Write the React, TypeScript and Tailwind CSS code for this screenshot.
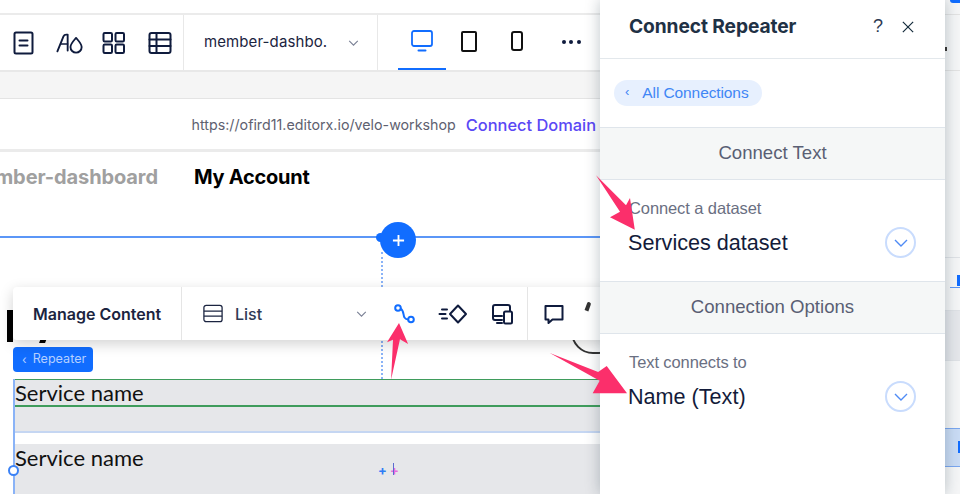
import React from "react";

const ink = "#162d3d";
const navy = "#0f1b3d";

function Arrow({ className, points }: { className: string; points: string }) {
  return (
    <svg className={className} viewBox="0 0 100 100" preserveAspectRatio="none">
      <polygon points={points} fill="#fb2f6b" />
    </svg>
  );
}

function Icon({ children, className }: { children: React.ReactNode; className?: string }) {
  return (
    <svg viewBox="0 0 24 24" fill="none" stroke={navy} strokeWidth="2" strokeLinecap="round" strokeLinejoin="round" className={className ?? "w-6 h-6"}>
      {children}
    </svg>
  );
}

function RoundChevron() {
  return (
    <div className="w-[31px] h-[31px] rounded-full border-2 border-[#c9dcfd] flex items-center justify-center">
      <svg viewBox="0 0 14 8" className="w-[14px] h-[8px]" fill="none" stroke="#4f8bf5" strokeWidth="1.4">
        <path d="M1 1l6 6 6-6" />
      </svg>
    </div>
  );
}

function Field({ label, value }: { label: string; value: string }) {
  return (
    <div className="flex items-start justify-between pl-[29px] pr-[29px] pt-[18px] h-[101px]">
      <div>
        <div className="text-[16.5px] leading-[20px] text-[#6a6f82] font-['Liberation_Sans',sans-serif] tracking-[-0.1px]">{label}</div>
        <div className="text-[21.6px] leading-[28px] mt-[11px] -ml-[1px] text-[#131b3a] font-['Liberation_Sans',sans-serif]">{value}</div>
      </div>
      <div className="mt-[29px]"><RoundChevron /></div>
    </div>
  );
}

function SectionHead({ children }: { children: React.ReactNode }) {
  return (
    <div className="h-[53px] bg-[#f5f7f7] border-y border-[#dfe5eb] flex items-center justify-center text-[18.6px] text-[#5a5f74] font-['Liberation_Sans',sans-serif]">
      <span className="-mt-[1px]">{children}</span>
    </div>
  );
}

export default function App() {
  return (
    <div className="relative w-[960px] h-[494px] overflow-hidden bg-white font-['Inter',sans-serif]">
      {/* Top bar */}
      <div className="h-[15px] border-b-2 border-[#ebebeb]" />
      <div className="h-[57px] flex items-stretch border-b-2 border-[#e8e8e8] bg-white">
        <div className="w-[184px] flex items-center pl-[11px] gap-[20px] border-r border-[#e8e8e8] shrink-0">
          <Icon className="w-[24px] h-[24px]">
            <rect x="3.500" y="1.500" width="18" height="21" rx="1.500" />
            <path d="M8.500 9.500h8M8.500 14.500h8" />
          </Icon>
          <svg viewBox="0 0 30 24" className="w-[28px] h-[24px] ml-[1px]" fill="none" stroke={navy} strokeWidth="2" strokeLinecap="round" strokeLinejoin="round">
            <path d="M1.500 21L8 5C8.500 3.800 9.500 3 11 3L12.500 3L12.500 20" />
            <path d="M5.500 13H12.500" strokeWidth="1.500" />
            <path d="M21.500 6.500C24.500 10 27.500 13 27.500 16.300a6 6 0 0 1-12 0C15.500 13 18.500 10 21.500 6.500z" />
          </svg>
          <Icon className="w-[24px] h-[24px] -ml-[2px]">
            <rect x="1.500" y="2" width="8.500" height="8.500" rx="1.200" />
            <rect x="13.500" y="2" width="8.500" height="8.500" rx="1.200" />
            <rect x="1.500" y="13.500" width="8.500" height="8.500" rx="1.200" />
            <rect x="13.500" y="13.500" width="8.500" height="8.500" rx="1.200" />
          </Icon>
          <Icon className="w-[24px] h-[24px] ml-[2px]">
            <rect x="1.500" y="2" width="21" height="20" rx="2" />
            <path d="M1.500 8.500h21M1.500 15h21M8.500 2v20" />
          </Icon>
        </div>
        <div className="w-[194px] border-r border-[#e8e8e8] flex items-center pl-[20px] shrink-0">
          <span className="text-[15px] text-[#1b2440] tracking-[0.1px]">member-dashbo.</span>
          <svg viewBox="0 0 12 7" className="ml-[21px] w-[11px] h-[6px]" fill="none" stroke="#7a8095" strokeWidth="1.300"><path d="M1 1l5 5 5-5" /></svg>
        </div>
        <div className="flex items-stretch pl-[20px]">
          <div className="w-[48px] relative flex items-center justify-center pb-[3px]">
            <svg viewBox="0 0 24 24" className="w-[24px] h-[24px]" fill="none" stroke="#116dff" strokeWidth="1.800" strokeLinecap="round">
              <rect x="2" y="2" width="20" height="15" rx="2" />
              <path d="M8.500 21.500h7" strokeWidth="2" />
            </svg>
            <div className="absolute bottom-0 left-0 right-0 h-[2px] bg-[#116dff]" />
          </div>
          <div className="w-[48px] -ml-[1px] flex items-center justify-center pb-[3px]">
            <div className="w-[16px] h-[21px] rounded-[2px] border-2 border-[#111]" />
          </div>
          <div className="w-[48px] flex items-center justify-center pb-[3px]">
            <div className="w-[12px] h-[20px] rounded-[3px] border-2 border-[#111]" />
          </div>
          <div className="w-[60px] flex items-center justify-center gap-[3.5px] pb-[2px]">
            <span className="w-[4px] h-[4px] rounded-full bg-[#0f1b3d]" />
            <span className="w-[4px] h-[4px] rounded-full bg-[#0f1b3d]" />
            <span className="w-[4px] h-[4px] rounded-full bg-[#0f1b3d]" />
          </div>
        </div>
      </div>
      {/* Grey strip */}
      <div className="h-[27px] bg-[#f5f5f5] border-b border-[#e4e4e4]" />
      {/* URL bar */}
      <div className="h-[53px] border-b-[3px] border-[#ebebeb] flex items-center justify-end pr-[364px] gap-[10px] pt-[2px]">
        <span className="text-[14.25px] text-[#5e6170] whitespace-nowrap">https://ofird11.editorx.io/velo-workshop</span>
        <span className="text-[16.4px] font-medium text-[#5a48f5] whitespace-nowrap">Connect Domain</span>
      </div>
      {/* Site page */}
      <div className="flex items-center h-[50px] -ml-[35px] gap-[36px]">
        <span className="text-[20px] font-bold text-[#a0a0a0] whitespace-nowrap tracking-[-0.1px]">member-dashboard</span>
        <span className="text-[20px] font-bold text-black whitespace-nowrap tracking-[-0.25px]">My Account</span>
      </div>
      <div className="h-[34px]" />
      <div className="h-[2px] w-[600px] bg-[#5b96f7]" />

      {/* Repeater */}
      <div className="mt-[141px] ml-[13px] w-[587px] border-l-2 border-[#8ab3f7]">
        <div className="h-[28px] bg-[#e6e7ea] border-t border-b-2 border-t-[#3f9c5c] border-b-[#3f9c5c] leading-[26px] text-[22px] text-[#111] font-['Lato',sans-serif]">
          Service name
        </div>
        <div className="h-[26px] bg-[#e6e7ea] border-b-2 border-[#c5d6f2]" />
        <div className="h-[11px]" />
        <div className="h-[60px] bg-[#e6e7ea] leading-[28px] text-[22px] text-[#111] font-['Lato',sans-serif]">
          Service name
        </div>
      </div>

      {/* Selection handles */}
      <div className="absolute left-[8px] top-[465px] w-[11px] h-[11px] rounded-full bg-white border-2 border-[#3b82f6]" />
      <div className="absolute left-[13px] top-[347px] w-[80px] h-[25px] rounded-[4px] bg-[#116dff] flex items-center pl-[9px] gap-[6px] text-[12.6px] text-[#b5d0ff]">
        <span className="text-[12px]">‹</span><span>Repeater</span>
      </div>
      <div className="absolute left-[381px] top-[252px] h-[127px] border-l-2 border-dotted border-[#8ab3f7]" />
      <div className="absolute left-[376px] top-[233px] w-[9px] h-[9px] rounded-full bg-[#116dff]" />
      <div className="absolute left-[380px] top-[222px] w-[36px] h-[36px] rounded-full bg-[#116dff] flex items-center justify-center">
        <svg viewBox="0 0 14 14" className="w-[13px] h-[13px]" stroke="white" strokeWidth="2"><path d="M7 1v12M1 7h12" /></svg>
      </div>
      <div className="absolute left-[378px] top-[464px] text-[#2f7cf6] text-[13px] leading-[12px] font-bold">+</div>
      <div className="absolute left-[390px] top-[464px] text-[#e56adf] text-[13px] leading-[12px] font-bold">+</div>
      <div className="absolute left-[393px] top-[463px] h-[12px] w-[1px] bg-[#5a6bd0]" />

      {/* Heading fragment behind toolbar */}
      <div className="absolute left-[7px] top-[310px] w-[6px] h-[32px] bg-black" />
      <div className="absolute left-[40px] top-[338px] w-[6px] h-[5px] bg-black -skew-x-[20deg]" />
      <div className="absolute left-[571px] top-[310px] w-[50px] h-[44px] rounded-full border-2 border-[#333]" />

      {/* Floating toolbar */}
      <div className="absolute left-[13px] top-[287px] w-[600px] h-[53px] bg-white rounded-[4px] shadow-[0_4px_14px_rgba(0,0,0,0.18)] flex items-stretch">
        <div className="w-[169px] border-r border-[#e5e5e5] flex items-center pl-[20px] text-[16px] font-semibold text-[#1b2440] shrink-0">
          Manage Content
        </div>
        <div className="w-[188px] flex items-center pl-[21px] shrink-0">
          <svg viewBox="0 0 22 20" className="w-[20px] h-[19px]" fill="none" stroke="#1b2440" strokeWidth="1.400">
            <rect x="1" y="1" width="20" height="18" rx="2.500" />
            <path d="M1 7.500h20M1 13h20" />
          </svg>
          <span className="ml-[12px] text-[16px] font-medium text-[#2f3a55]">List</span>
          <svg viewBox="0 0 12 7" className="ml-auto mr-[3px] w-[11px] h-[6px]" fill="none" stroke="#7a8095" strokeWidth="1.300"><path d="M1 1l5 5 5-5" /></svg>
        </div>
        <div className="w-[158px] border-r border-[#e5e5e5] flex items-center gap-[22px] shrink-0 pl-[22px]">
          <svg viewBox="0 0 24 24" className="w-[24px] h-[24px]" fill="none" stroke="#116dff" strokeWidth="2" strokeLinecap="round">
            <circle cx="6" cy="6" r="2.800" />
            <circle cx="19" cy="17.500" r="2.800" />
            <path d="M8.800 6.800C12 8.500 11 13 12.500 15.500C13.500 17 15 17.500 16.200 17.500" />
          </svg>
          <svg viewBox="0 0 30 24" className="w-[30px] h-[24px]" fill="none" stroke={navy} strokeWidth="2" strokeLinecap="round" strokeLinejoin="round">
            <path d="M20 3.500l8 8.500-8 8.500-8-8.500z" />
            <path d="M4 7.500h5M1.500 12h6M4 16.500h5" />
          </svg>
          <svg viewBox="0 0 24 24" className="w-[24px] h-[24px]" fill="none" stroke={navy} strokeWidth="2" strokeLinecap="round" strokeLinejoin="round">
            <path d="M12 18H5a2 2 0 0 1-2-2V5a2 2 0 0 1 2-2h13a2 2 0 0 1 2 2v4" />
            <path d="M3 14h9" />
            <rect x="14" y="9.500" width="8" height="12" rx="1.500" />
            <path d="M7 21h5" />
          </svg>
        </div>
        <div className="flex items-center pl-[14px] gap-[20px]">
          <svg viewBox="0 0 24 24" className="w-[24px] h-[24px]" fill="none" stroke={navy} strokeWidth="2" strokeLinejoin="round">
            <path d="M3.500 4h17v13.500h-10l-4 3.500v-3.500h-3z" />
          </svg>
          <span className="w-[4px] h-[9px] bg-[#333] rounded-t-[3px] rotate-[20deg] -mt-[14px]" />
        </div>
      </div>

      {/* Right strip */}
      <div className="absolute left-[945px] top-0 w-[15px] h-[494px] bg-[#f5f6f7] flex flex-col">
        <div className="h-[14px] relative"><div className="absolute left-[5px] right-0 top-0 h-[3px] bg-[#116dff] rounded-bl-[3px]" /></div>
        <div className="h-[57px] border-y border-[#e3e3e3]" />
        <div className="h-[186px]" />
        <div className="h-[54px] border-y border-[#dfe2e6] relative">
          <div className="absolute right-0 top-[17px] w-[3px] h-[11px] bg-[#116dff]" />
          <div className="absolute left-[5px] right-0 top-[29px] h-[1px] bg-[#5b96f7]" />
        </div>
        <div className="h-[49px] bg-[#e5e7eb]" />
        <div className="h-[68px] border-t border-[#dfe2e6]" />
        <div className="h-[39px] bg-[#cadcf5] border-y border-[#7aa7f0] relative">
          <div className="absolute right-0 top-[12px] w-[2px] h-[12px] bg-[#116dff]" />
        </div>
      </div>

      {/* Connect panel */}
      <div className="absolute left-[600px] top-0 w-[345px] h-[494px] bg-white shadow-[0_0_14px_rgba(22,45,61,0.28)] flex flex-col">
        <div className="h-[59px] border-b border-[#e3e8ec] flex items-center pl-[29px] pr-[31px] pb-[5px]">
          <span className="text-[19.2px] font-bold text-[#1f3145] tracking-[-0.1px] flex-1">Connect Repeater</span>
          <span className="text-[18px] text-[#2e3a52] mr-[19px] font-['Liberation_Sans',sans-serif]">?</span>
          <svg viewBox="0 0 14 14" className="w-[12px] h-[12px]" stroke={ink} strokeWidth="1.400"><path d="M1 1l12 12M13 1L1 13" /></svg>
        </div>
        <div className="h-[68px] flex items-center pl-[14px]">
          <div className="h-[26px] w-[148px] bg-[#e7f0fe] rounded-full flex items-center pl-[11px] text-[#3f86f5] font-['Liberation_Sans',sans-serif]">
            <span className="text-[13px] leading-none -mt-[3px]">‹</span>
            <span className="ml-[13px] text-[15.5px] tracking-[-0.1px]">All Connections</span>
          </div>
        </div>
        <SectionHead>Connect Text</SectionHead>
        <Field label="Connect a dataset" value="Services dataset" />
        <SectionHead>Connection Options</SectionHead>
        <Field label="Text connects to" value="Name (Text)" />
      </div>
      <div className="absolute left-[945px] top-[47px] w-[2px] h-[4px] bg-[#333]" />

      {/* Pink annotation arrows */}
      <Arrow className="absolute left-[596px] top-[174px] w-[40px] h-[60px]" points="0,2 75,52 85,40 97,93 35,72 60,63" />
      <Arrow className="absolute left-[387px] top-[323px] w-[24px] h-[58px]" points="50,0 88,36 54,28 17,98 25,29 0,33" />
      <Arrow className="absolute left-[549px] top-[351px] w-[78px] h-[48px]" points="1,4 63,44 74,31 100,88 56,88 65,62" />
    </div>
  );
}
